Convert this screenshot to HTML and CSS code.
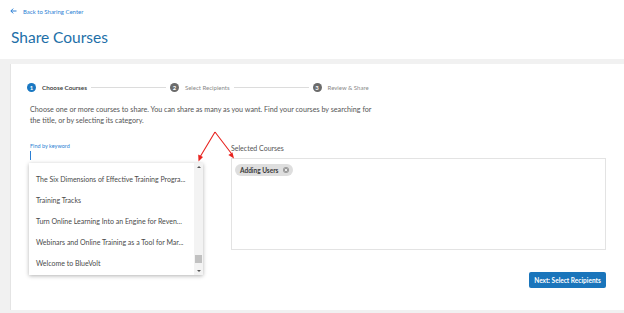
FILE: index.html
```html
<html>
<head>
   <link rel="stylesheet" href="styles.css">
</head>
<body>
<div class="top">
  <a class="back" href="#">
    <svg width="7" height="6" viewBox="0 0 7 6"><path d="M6.5 3H1M3.2 0.6L0.8 3l2.4 2.4" fill="none" stroke="#2b7fd4" stroke-width="1"/></svg>
    Back to Sharing Center
  </a>
  <h1>Share Courses</h1>
</div>

<div class="card">
  <ol class="stepper">
    <li class="step active"><span class="num">1</span>Choose Courses</li>
    <li class="line"></li>
    <li class="step"><span class="num">2</span>Select Recipients</li>
    <li class="line"></li>
    <li class="step"><span class="num">3</span>Review &amp; Share</li>
  </ol>

  <p class="intro">Choose one or more courses to share. You can share as many as you want. Find your courses by searching for the title, or by selecting its category.</p>

  <div class="pick">
    <div class="search">
      <label class="find">Find by keyword</label>
      <div class="field"><span class="caret"></span></div>
      <div class="menu">
        <ul>
          <li>The Six Dimensions of Effective Training Progra...</li>
          <li>Training Tracks</li>
          <li>Turn Online Learning Into an Engine for Reven...</li>
          <li>Webinars and Online Training as a Tool for Mar...</li>
          <li>Welcome to BlueVolt</li>
        </ul>
        <div class="scroll">
          <span class="up"></span>
          <span class="thumb"></span>
          <span class="down"></span>
        </div>
      </div>
    </div>

    <div class="selected">
      <div class="sel-label">Selected Courses</div>
      <div class="sel-box">
        <span class="chip">Adding Users
          <svg width="6" height="6" viewBox="0 0 6 6"><circle cx="3" cy="3" r="3" fill="#9a9a9a"/><path d="M1.8 1.8l2.4 2.4M4.2 1.8L1.8 4.2" stroke="#fff" stroke-width="0.8"/></svg>
        </span>
      </div>
    </div>
  </div>

  <div class="actions">
    <button class="btn">Next: Select Recipients</button>
  </div>
</div>

<!-- annotation arrows -->
<svg class="notes" width="624" height="313" viewBox="0 0 624 313">
  <path d="M215 132L200 157M215 132L231 153" fill="none" stroke="#e8231f" stroke-width="1.1"/>
  <path d="M198.5 161.5l-0.3-7 4.8 2.6z" fill="#e8231f"/>
  <path d="M234 158.5l-5.6-3.4 4-2.8z" fill="#e8231f"/>
</svg>
</body>
</html>
```
FILE: styles.css
```css
  body {
     margin: 0;
     background: #f1f1f1;
     font-family: Lato, "Open Sans", sans-serif;
     position: relative;
  }

  .top {
     background: #fff;
     height: 59px;
     padding: 7px 10px 0;
     box-sizing: border-box;
  }

  .back {
     display: flex;
     align-items: center;
     gap: 6px;
     height: 8px;
     font-size: 6px;
     color: #2b7fd4;
     text-decoration: none;
  }

  h1 {
     margin: 12px 0 0 1px;
     font-size: 15.5px;
     line-height: 20px;
     font-weight: 400;
     color: #1d6fa8;
  }

  .card {
     margin: 5px 0 0 10px;
     height: 246px;
     box-sizing: border-box;
     padding: 18px 18px 0 18px;
     background: #fff;
     border-left: 1px solid #e4e4e4;
  }

  .stepper {
     display: flex;
     align-items: center;
     height: 10px;
     margin: 0 0 0 -2px;
     padding: 0;
     list-style: none;
     font-size: 6px;
     color: #8a8a8a;
  }

  .step {
     display: flex;
     align-items: center;
     gap: 6px;
  }

  .step.active {
     color: #333;
     font-size: 6.3px;
     font-weight: 600;
  }

  .num {
     width: 9px;
     height: 9px;
     border-radius: 50%;
     background: #6b6b6b;
     color: #fff;
     font-size: 6px;
     font-weight: 700;
     display: flex;
     align-items: center;
     justify-content: center;
  }

  .active .num {
     background: #1a78c2;
  }

  .line {
     width: 75px;
     height: 1px;
     margin: 0 4px;
     background: #dcdcdc;
  }

  .intro {
     width: 342px;
     margin: 11.5px 0 0 1px;
     font-size: 7.2px;
     line-height: 11px;
     color: #555;
  }

  .pick {
     display: grid;
     grid-template-columns: 174px 375px;
     gap: 28px;
     margin-top: 16.5px;
  }

  .search {
     position: relative;
  }

  .find {
     display: block;
     margin-left: 1px;
     font-size: 5.5px;
     line-height: 8px;
     color: #2b7fd4;
  }

  .field {
     height: 10px;
     margin-top: 1px;
  }

  .caret {
     display: block;
     width: 1px;
     height: 9px;
     margin-left: 1px;
     background: #2b7fd4;
  }

  .menu {
     position: absolute;
     top: 21px;
     left: 0;
     width: 174px;
     height: 112px;
     background: #fff;
     box-shadow: 0 1px 4px rgba(0, 0, 0, 0.3);
     overflow: hidden;
  }

  .menu ul {
     margin: 0;
     padding: 5.5px 0 0 7px;
     list-style: none;
     font-size: 7px;
     color: #4a4a4a;
  }

  .menu li {
     height: 21px;
     line-height: 21px;
     white-space: nowrap;
  }

  .scroll {
     position: absolute;
     top: 0;
     right: 0;
     width: 9px;
     height: 100%;
     background: #f3f3f3;
  }

  .up, .down {
     position: absolute;
     left: 2.5px;
     width: 0;
     height: 0;
     border-left: 2px solid transparent;
     border-right: 2px solid transparent;
  }

  .up {
     top: 3px;
     border-bottom: 2.5px solid #555;
  }

  .down {
     bottom: 3px;
     border-top: 2.5px solid #555;
  }

  .thumb {
     position: absolute;
     top: 92px;
     left: 1px;
     width: 7px;
     height: 8px;
     background: #c1c1c1;
  }

  .selected {
     padding-top: 1px;
  }

  .sel-label {
     font-size: 7px;
     line-height: 10px;
     color: #555;
  }

  .sel-box {
     height: 92px;
     margin-top: 5px;
     box-sizing: border-box;
     padding: 5px 3px;
     border: 1px solid #e3e3e3;
  }

  .chip {
     display: inline-flex;
     align-items: center;
     gap: 5px;
     height: 12px;
     padding: 0 4px 0 5px;
     border-radius: 6px;
     background: #dedede;
     font-size: 6.5px;
     font-weight: 700;
     color: #3a3a3a;
  }

  .actions {
     display: flex;
     justify-content: flex-end;
     margin-top: 22px;
  }

  .btn {
     width: 77px;
     height: 16px;
     padding: 0;
     border: none;
     border-radius: 2px;
     background: #1a75bb;
     color: #fff;
     font-family: Lato, "Open Sans", sans-serif;
     font-size: 6.5px;
     font-weight: 700;
  }

  .notes {
     position: absolute;
     top: 0;
     left: 0;
     pointer-events: none;
  }
```
